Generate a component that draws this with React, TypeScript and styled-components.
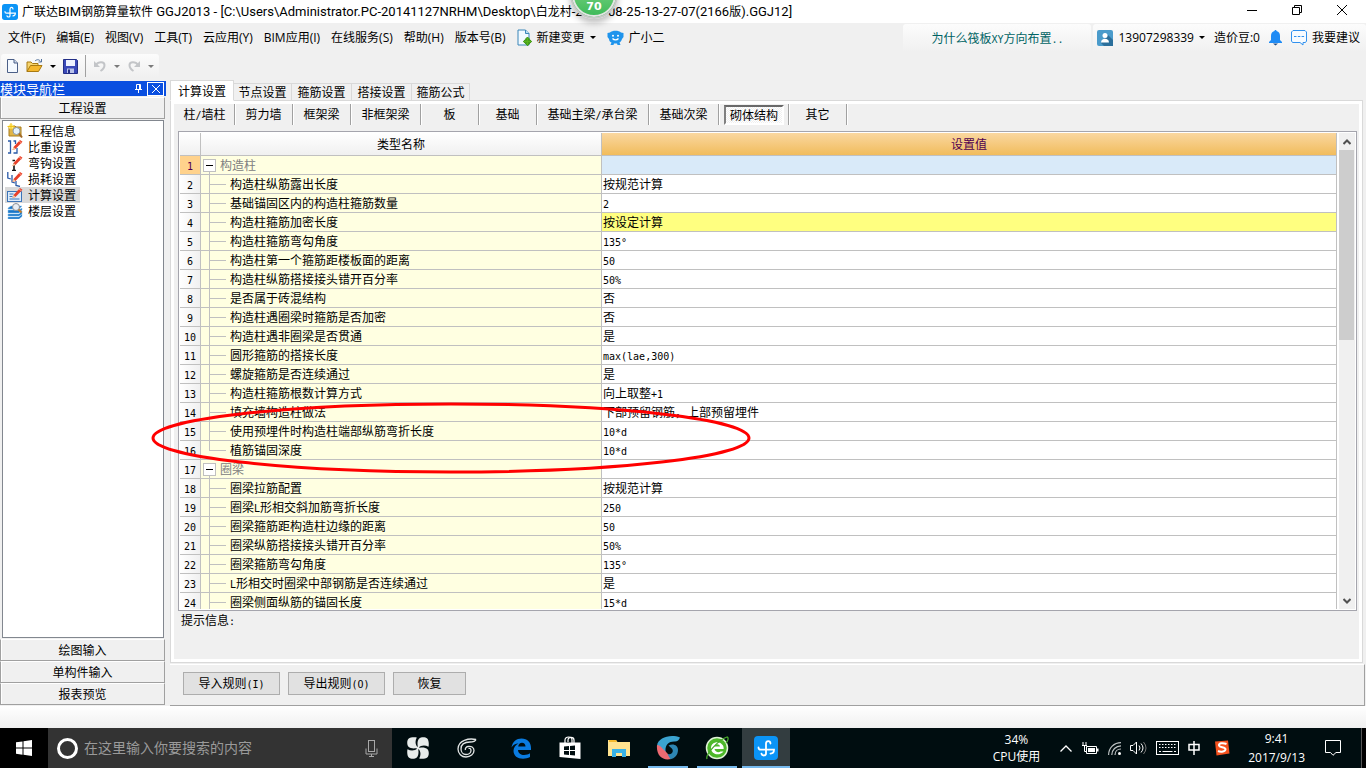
import React from "react";
import styled, { createGlobalStyle, css } from "styled-components";

const song = `"Noto Sans CJK SC", sans-serif`;
const ui = `"Open Sans", "Noto Sans CJK SC", sans-serif`;
const face = "#f0f0f0";
const line = "#c0c0c0";

const GlobalStyle = createGlobalStyle`
  *, *::before, *::after { box-sizing: border-box; }
  html, body { margin: 0; padding: 0; }
  body { background: ${face}; font: 12px/16px ${song}; color: #000; }
  button, input { font: inherit; color: inherit; margin: 0; padding: 0; border: 0; background: none; }
  button { cursor: pointer; white-space: nowrap; }
  svg { display: block; flex: none; }
`;

const Window = styled.div`
  display: flex;
  flex-direction: column;
  height: 100vh;
  min-height: 480px;
  overflow: hidden;
`;

/* ---------- title bar ---------- */
const TitleBar = styled.header`
  position: relative;
  display: flex;
  align-items: center;
  height: 23px;
  flex: none;
  padding: 0 2px;
  background: #fff;
`;
const TitleText = styled.h1`
  flex: 1;
  margin: 0 0 0 4px;
  font: 400 12px/22px ${ui};
  white-space: nowrap;
  overflow: hidden;
`;
const TitleLatin = styled.span`
  font: 13px/1 Roboto, sans-serif;
`;
const CaptionButtons = styled.div`
  display: flex;
  height: 100%;
`;
const CaptionButton = styled.button`
  display: grid;
  place-items: center;
  width: 45px;
  padding-bottom: 3px;
`;
const SpeedBall = styled.div`
  position: absolute;
  z-index: 3;
  left: 570px;
  top: -29px;
  width: 48px;
  height: 48px;
  border-radius: 50%;
  border: 2px solid #c9c9c9;
  background: linear-gradient(#8fdc90, #3cb958);
  box-shadow: inset 0 0 0 2px #e4e4e4, 0 4px 6px rgba(0, 0, 0, 0.25);
  color: #fff;
  font: 700 11px/14px "DejaVu Sans", sans-serif;
  text-align: center;
  padding-top: 27px;
`;

/* ---------- menu bar ---------- */
const MenuBar = styled.nav`
  display: flex;
  align-items: center;
  height: 29px;
  flex: none;
  padding-left: 8px;
  font-family: ${ui};
`;
const MenuGroup = styled.div`
  display: flex;
  align-items: center;
  gap: 11px;
  flex: 1;
`;
const MenuItem = styled.button`
  display: flex;
  align-items: center;
  gap: 5px;
  height: 24px;
`;
const Caret = styled.i<{ $dim?: boolean }>`
  width: 0;
  height: 0;
  border: 3px solid transparent;
  border-bottom: 0;
  border-top-color: ${(p) => (p.$dim ? "#7a7a7a" : "#000")};
`;
const MenuPanel = styled.div<{ $question?: boolean }>`
  display: flex;
  align-items: center;
  height: 28px;
  border-radius: 3px 3px 0 0;
  background: linear-gradient(#fcfcfc, #f0f0f0);
  ${(p) =>
    p.$question
      ? css`width: 188px; justify-content: center; color: #006464; font-family: ${song};`
      : css`gap: 9px; margin-left: 2px; padding: 0 6px 0 4px;`}
`;
const PanelLink = styled.a`
  color: inherit;
  text-decoration: none;
`;

/* ---------- tool bar ---------- */
const ToolBar = styled.div`
  display: flex;
  align-items: center;
  align-self: flex-start;
  height: 24px;
  flex: none;
  margin: 2px 0 2px 1px;
  padding: 0 5px;
  gap: 7px;
  border-radius: 3px;
  background: linear-gradient(#fcfcfc, #f0f0f0);
`;
const ToolButton = styled.button`
  display: flex;
  align-items: center;
  gap: 7px;
  height: 22px;
`;
const ToolDivider = styled.span`
  width: 1px;
  height: 22px;
  background: #a0a0a0;
`;

/* ---------- workspace ---------- */
const Workspace = styled.div`
  display: flex;
  flex: 1;
  min-height: 0;
  padding: 0 1px 0 0;
  gap: 4px;
`;
const SidePanel = styled.aside`
  display: flex;
  flex-direction: column;
  width: 166px;
  flex: none;
  padding: 1px 1px 1px 0;
`;
const SideTitle = styled.div`
  display: flex;
  align-items: center;
  gap: 4px;
  height: 15px;
  flex: none;
  margin-right: -1px;
  padding-right: 2px;
  background: #0a4fe0;
  color: #fff;
  font-size: 13px;
  line-height: 14px;
`;
const SideTitleText = styled.span`
  flex: 1;
`;
const SideTitleButton = styled.button<{ $boxed?: boolean }>`
  display: grid;
  place-items: center;
  width: ${(p) => (p.$boxed ? 17 : 9)}px;
  height: 14px;
  border: ${(p) => (p.$boxed ? "1px solid #fff" : "0")};
`;
const SectionButton = styled.button`
  height: 22px;
  flex: none;
  border: 1px solid #a0a0a0;
  border-top-color: #fff;
  box-shadow: inset 1px 0 #fff;
  line-height: 20px;
`;
const FirstSection = styled(SectionButton)`
  margin-top: 1px;
`;
const SideList = styled.ul`
  flex: 1;
  min-height: 0;
  margin: 1px 1px 1px 2px;
  padding: 2px;
  border: 1px solid #82878f;
  background: #fff;
  list-style: none;
`;
const SideItem = styled.button<{ $on?: boolean }>`
  display: flex;
  align-items: center;
  gap: 5px;
  height: 16px;
  padding: 0 4px 0 2px;
  background: ${(p) => (p.$on ? "#d9d9d9" : "transparent")};
`;

const Main = styled.main`
  display: flex;
  flex-direction: column;
  flex: 1;
  min-width: 0;
`;
const Tabs = styled.div`
  display: flex;
  align-items: flex-end;
  height: 21px;
  flex: none;
  margin-bottom: -1px;
  z-index: 1;
`;
const Tab = styled.button<{ $on?: boolean }>`
  flex: none;
  width: ${(p) => (p.$on ? 64 : 60)}px;
  height: ${(p) => (p.$on ? 21 : 18)}px;
  border: 1px solid #d9d9d9;
  border-left-width: ${(p) => (p.$on ? 1 : 0)}px;
  border-bottom-color: ${(p) => (p.$on ? "#fff" : "#d9d9d9")};
  background: ${(p) => (p.$on ? "#fff" : face)};
  line-height: 16px;
  &:nth-child(2), &:last-child { width: 58px; }
`;
const TabBody = styled.section`
  display: flex;
  flex-direction: column;
  flex: 1;
  min-height: 0;
  margin-right: 2px;
  padding: 0 5px 0 4px;
  border: 1px solid #d9d9d9;
  box-shadow: inset 0 0 0 3px #fff;
`;
const KindBar = styled.div`
  display: flex;
  height: 21px;
  flex: none;
  margin-top: 3px;
`;
const Kind = styled.button<{ $w?: number }>`
  width: ${(p) => p.$w ?? 58}px;
  flex: none;
  padding-bottom: 2px;
  border-right: 1px solid #a0a0a0;
  box-shadow: 1px 0 #fff;
  line-height: 18px;
`;
const KindOn = styled(Kind)`
  display: grid;
  place-items: center;
  padding: 0 4px 0 5px;
`;
const Pressed = styled.span`
  width: 100%;
  height: 20px;
  border: 2px solid #fff;
  border-top-color: #696969;
  border-left-color: #808080;
  background: repeating-conic-gradient(#fff 0 25%, #f0f0f0 0 50%) 0 0 / 2px 2px;
  line-height: 16px;
`;
const GridHolder = styled.div`
  position: relative;
  display: flex;
  flex: 1;
  min-height: 0;
  margin: 6px 0 0 3px;
`;
const GridFrame = styled.div`
  display: flex;
  flex: 1;
  min-width: 0;
  padding: 1px;
  border: 1px solid #a5a5ad;
  background: #fff;
  overflow: hidden;
`;
const Scroller = styled.div`
  flex: 1;
  min-width: 0;
  overflow: hidden;
`;
const Table = styled.table`
  width: 100%;
  table-layout: fixed;
  border-collapse: separate;
  border-spacing: 0;
`;
const Head = styled.th<{ $on?: boolean }>`
  height: 23px;
  padding: 0;
  border-right: 1px solid ${line};
  border-bottom: 1px solid ${line};
  background: ${(p) => (p.$on ? "linear-gradient(#fad7a0, #f1bc5c)" : "linear-gradient(#fff, #f0f0f0)")};
  color: ${(p) => (p.$on ? "#500050" : "#000")};
  font-weight: 400;
  line-height: 22px;
`;
const cell = css`
  height: 19px;
  padding: 0;
  border-right: 1px solid ${line};
  border-bottom: 1px solid ${line};
  font-weight: 400;
  line-height: 18px;
  white-space: nowrap;
  overflow: hidden;
`;
const RowNo = styled.th<{ $on?: boolean }>`
  ${cell}
  background: ${(p) => (p.$on ? "#ffd28c" : "linear-gradient(90deg, #fff, #f0f0f0)")};
  color: ${(p) => (p.$on ? "#500050" : "#000")};
  text-align: center;
`;
const NameCell = styled.td<{ $group?: boolean }>`
  ${cell}
  background: ${(p) =>
    p.$group ? `linear-gradient(${line}, ${line}) 8px 100% / 1px 4px no-repeat #ffffe1` : "#ffffe1"};
  color: ${(p) => (p.$group ? "#808080" : "#000")};
`;
const NameLine = styled.div`
  display: flex;
  align-items: center;
  height: 18px;
`;
const ValueCell = styled.td<{ $tone?: "blue" | "yellow" }>`
  ${cell}
  padding-left: 1px;
  background: ${(p) => (p.$tone === "blue" ? "#d9eaf9" : p.$tone === "yellow" ? "#ffff80" : "#fff")};
`;
const Toggle = styled.button`
  display: grid;
  place-items: center;
  width: 13px;
  height: 13px;
  margin: 0 4px 0 2px;
  border: 1px solid ${line};
  background: #fff;
`;
const Branch = styled.span<{ $last?: boolean }>`
  width: 17px;
  height: 18px;
  margin: 0 4px 0 8px;
  background:
    linear-gradient(${line}, ${line}) 0 0 / 1px ${(p) => (p.$last ? "9px" : "100%")} no-repeat,
    linear-gradient(${line}, ${line}) 0 9px / 17px 1px no-repeat;
`;
const ScrollBar = styled.div`
  display: flex;
  flex-direction: column;
  width: 16px;
  flex: none;
  margin-left: 2px;
  background: ${face};
`;
const ScrollArrow = styled.button`
  display: grid;
  place-items: center;
  height: 17px;
`;
const ScrollTrack = styled.div`
  flex: 1;
  padding-right: 1px;
`;
const ScrollThumb = styled.div`
  height: 43%;
  background: #cdcdcd;
`;
const Callout = styled.svg`
  position: absolute;
  z-index: 2;
  left: -28px;
  top: 269px;
  pointer-events: none;
`;
const Hint = styled.p`
  height: 51px;
  flex: none;
  margin: 0;
  padding: 1px 6px;
`;
const Actions = styled.footer`
  display: flex;
  gap: 8px;
  height: 42px;
  flex: none;
  margin-top: 1px;
  padding: 7px 13px;
  border-top: 1px solid #fff;
  border-right: 1px solid #a0a0a0;
  border-bottom: 1px solid #a0a0a0;
`;
const ActionButton = styled.button<{ $short?: boolean }>`
  width: ${(p) => (p.$short ? 73 : 97)}px;
  height: 23px;
  padding-bottom: 2px;
  border: 1px solid #adadad;
  background: #e1e1e1;
  line-height: 18px;
`;
const StatusStrip = styled.div`
  height: 22px;
  flex: none;
  background: linear-gradient(#fff, #f0f0f0);
`;

/* ---------- task bar ---------- */
const TaskBar = styled.footer`
  display: flex;
  align-items: center;
  height: 40px;
  flex: none;
  background: #000d10;
  color: #fff;
  font-family: ${ui};
`;
const StartButton = styled.button`
  display: grid;
  place-items: center;
  width: 48px;
  height: 40px;
  background: #000;
`;
const Search = styled.label`
  display: flex;
  align-items: center;
  gap: 5px;
  width: 344px;
  height: 40px;
  flex: none;
  padding: 0 14px 0 8px;
  background: #333;
`;
const SearchInput = styled.input`
  flex: 1;
  min-width: 0;
  outline: 0;
  font-size: 14px;
  line-height: 20px;
  &::placeholder { color: #9a9a9a; opacity: 1; }
`;
const Apps = styled.div<{ $wide?: boolean }>`
  display: flex;
  gap: 1px;
  margin-left: ${(p) => (p.$wide ? 6 : 2)}px;
`;
const AppButton = styled.button<{ $state?: "open" | "active" }>`
  display: grid;
  place-items: center;
  width: 48px;
  height: 40px;
  ${(p) =>
    p.$state === "open" &&
    css`background: linear-gradient(#76b9ed, #76b9ed) 50% 100% / 40px 2px no-repeat;`}
  ${(p) =>
    p.$state === "active" &&
    css`background: linear-gradient(#76b9ed, #76b9ed) 0 100% / 100% 2px no-repeat #333d40;`}
`;
const Tray = styled.div`
  display: flex;
  align-items: center;
  margin-left: auto;
  height: 40px;
`;
const Meter = styled.div`
  margin-right: 20px;
  text-align: center;
  line-height: 17px;
`;
const TrayIcons = styled.div`
  display: flex;
  align-items: center;
  gap: 9px;
`;
const InputMethod = styled.button`
  margin-left: 5px;
`;
const Clock = styled.time`
  margin: 0 20px 0 18px;
  text-align: center;
  line-height: 19px;
`;
const ActionCenter = styled.button`
  display: grid;
  place-items: center;
  width: 37px;
  height: 40px;
  padding-right: 20px;
  border-right: 1px solid #555;
`;
const ShowDesktop = styled.span`
  width: 4px;
  height: 40px;
  background: #000;
`;

const Half = styled.span`
  font: 10px/1 "DejaVu Sans Mono", monospace;
`;

/* Half-width runs are set in a six-pixel monospace beside twelve-pixel Han characters. */
function Song({ children }: { children: string }) {
  return (
    <>
      {children.split(/([\x21-\x7e°]+)/).map((part, i) => (i % 2 ? <Half key={i}>{part}</Half> : part))}
    </>
  );
}

/* ---------- icons ---------- */
const AppLogo = ({ size }: { size: number }) => (
  <svg width={size} height={size} viewBox="0 0 24 24">
    <rect width="24" height="24" rx="4" fill="#0b94f6" />
    <path
      d="M16.500 7.500c-.2-3.300-4.500-3.300-4.500.3V17.500c0 2.600-4 2.600-4.500.2M4.500 11.500c0 1.500.8 2.200 2.200 2.200H20c0 2.300-1.300 3.700-3.500 4"
      fill="none" stroke="#fff" strokeWidth="1.800" strokeLinecap="round"
    />
  </svg>
);
const NewDoc = () => (
  <svg width="13" height="16" viewBox="0 0 13 16">
    <path d="M1.500 1.500h6.500l3.500 3.500v9.500h-10z" fill="#f4f9ff" stroke="#4b5f87" />
    <path d="M8 1.500V5h3.500" fill="#cfdcf0" stroke="#4b5f87" />
  </svg>
);
const OpenFolder = () => (
  <svg width="17" height="16" viewBox="0 0 17 16">
    <path d="M1 13.500V4h4l1.500 1.500H12V8" fill="#f7d56f" stroke="#a87a12" />
    <path d="M1 13.500 4.500 7.500H16l-3.500 6z" fill="#f5b82e" stroke="#a87a12" />
    <path d="M9 3c2-2 4.500-1.500 5.500.5M15.500 1v3h-3" fill="none" stroke="#51719c" />
  </svg>
);
const Save = () => (
  <svg width="15" height="15" viewBox="0 0 15 15">
    <path d="M.5.5h13l1 1v13H.5z" fill="#3a49b8" stroke="#232f86" />
    <path d="M3 1h9v6H3z" fill="#eef2ff" />
    <path d="M4 9.500h7V14H4z" fill="#b9c2ea" />
    <path d="M5 10.500h2V14H5z" fill="#232f86" />
  </svg>
);
const Undo = ({ flip }: { flip?: boolean }) => (
  <svg width="14" height="14" viewBox="0 0 14 14">
    <g transform={flip ? "translate(14 0) scale(-1 1)" : undefined}>
      <path d="M3 6c2.500-4 8.500-3.500 8.500 0 0 2.500-1.500 4.500-4 6" fill="none" stroke="#c3c5c8" strokeWidth="2" />
      <path d="M1 2v6h6z" fill="#c3c5c8" />
    </g>
  </svg>
);
const NewChange = () => (
  <svg width="15" height="17" viewBox="0 0 15 17">
    <path d="M1 1h7.500L12 4.500V16H1z" fill="#f1f9ff" stroke="#3a86b8" />
    <path d="M8.500 1v3.500H12" fill="#b8def5" stroke="#3a86b8" />
    <path d="M10.500 8l2 2.200h-1v1.300h1v-1l2.200 2-2.200 2v-1h-1v1h1l-2 2.200-2-2.200h1v-1h-1v1l-2.200-2 2.200-2v1h1v-1.300h-1z" fill="#58b41c" stroke="#3b9410" strokeWidth="1" />
  </svg>
);
const Robot = () => (
  <svg width="17" height="16" viewBox="0 0 17 16">
    <path d="M3 2.500C5 0 12 0 14 2.500l2.500.5v4L15 9c-.5 2-1.500 3-2.500 3.500L13.500 15h-3l-.5-1.500H7L6.500 15h-3l1-2.500C3 12 2.200 11 2 9L.5 7V3z" fill="#1f94ec" />
    <circle cx="6" cy="5.800" r="1" fill="#fff" />
    <circle cx="11" cy="5.800" r="1" fill="#fff" />
    <path d="M5.500 8.500c1.500 1.800 4.500 1.800 6 0" fill="none" stroke="#fff" strokeWidth="1.200" />
  </svg>
);
const User = () => (
  <svg width="16" height="16" viewBox="0 0 16 16">
    <rect width="16" height="16" rx="2" fill="#4a9bcb" />
    <path d="M11 5l5 5v6H7l-3-3z" fill="#2b6f9b" />
    <circle cx="8" cy="5.500" r="2.500" fill="#fff" />
    <path d="M4 12.500c0-5 8-5 8 0z" fill="#fff" />
  </svg>
);
const Bell = () => (
  <svg width="13" height="16" viewBox="0 0 13 16">
    <path d="M6.500 0c.8 0 1 .6 1 1C10 1.500 11 3.500 11 6v4l2 2v1H0v-1l2-2V6c0-2.500 1-4.500 3.500-5 0-.4.200-1 1-1z" fill="#1e8bf5" />
    <path d="M4 13.500h5l-2.500 2z" fill="#1a4b86" />
  </svg>
);
const Bubble = () => (
  <svg width="16" height="16" viewBox="0 0 16 16">
    <path d="M2 .5h12l1.500 1.500v9l-1 1.500H12V15l-3-2.500H1.500l-1-1.500V2z" fill="#f7fbff" stroke="#3191ee" />
    <path d="M3 6.500h2.500M6.800 6.500h2.500M10.600 6.500h2.500" stroke="#3191ee" />
  </svg>
);

const pencil = (
  <>
    <path d="M5.500 11 6.500 8 13 1l2.500 1.800L8.500 10z" fill="#e8402a" />
    <path d="M5.500 11l1-3 2 2z" fill="#f3d3a4" />
    <path d="M12 2l2.500 2" stroke="#ff9c84" />
  </>
);
const SideIcon = ({ kind }: { kind: string }) => (
  <svg width="16" height="16" viewBox="0 0 16 16">
    {kind === "info" && (
      <>
        <path d="M2 3h6l1 1h5v9H2z" fill="#e0b548" stroke="#a97c1c" />
        <circle cx="4" cy="3.500" r="2.500" fill="#ffef7a" />
        <path d="M4 0v7M.5 3.500h7" stroke="#f2c21a" />
        <circle cx="9.500" cy="8" r="3.500" fill="#e4f2fd" stroke="#8a99a8" />
        <path d="M12 10.500l3 4" stroke="#a06a28" strokeWidth="2" />
      </>
    )}
    {kind === "weight" && (
      <>
        <path d="M1 2h2.500v12H1M6.500 2h2v3M6.500 14H10V9" fill="none" stroke="#2a5aa8" strokeWidth="1.300" />
        {pencil}
      </>
    )}
    {kind === "hook" && (
      <>
        <path d="M7 8v7M5 15.500h4M5.500 5.500H8" stroke="#111" strokeWidth="1.600" fill="none" />
        {pencil}
      </>
    )}
    {kind === "loss" && (
      <>
        <path d="M.8 1v6l3 1M5 4v7l3 1M9 10v4.500l4 1" fill="none" stroke="#2a5aa8" strokeWidth="1.300" />
        {pencil}
      </>
    )}
    {kind === "calc" && (
      <>
        <rect x=".5" y="4.500" width="14" height="10" fill="#dcecfb" stroke="#3b74b8" />
        <path d="M2.500 7h4M2.500 9.500h3M2.500 12h10" stroke="#3b74b8" />
        {pencil}
      </>
    )}
    {kind === "floor" && (
      <>
        <path d="M1 5l3-2h11l-3 3H1zM1 7h11l3-2v2l-3 3H1zM1 11h11l3-3v3l-3 2H1zM1 14h11l3-3v2.500L12 16H1z" fill="#1976c8" stroke="#8fc6ee" strokeWidth=".5" />
        <circle cx="9" cy="4" r="3.500" fill="#e8eef4" stroke="#8a8f96" />
        <path d="M11.500 6.500l3 3" stroke="#c07c2c" strokeWidth="2" />
      </>
    )}
  </svg>
);

/* ---------- data ---------- */
const menus = ["文件(F)", "编辑(E)", "视图(V)", "工具(T)", "云应用(Y)", "BIM应用(I)", "在线服务(S)", "帮助(H)", "版本号(B)"];
const sideItems: [string, string][] = [
  ["info", "工程信息"], ["weight", "比重设置"], ["hook", "弯钩设置"],
  ["loss", "损耗设置"], ["calc", "计算设置"], ["floor", "楼层设置"],
];
const tabs = ["计算设置", "节点设置", "箍筋设置", "搭接设置", "箍筋公式"];
const kinds: [string, number][] = [
  ["柱/墙柱", 60], ["剪力墙", 58], ["框架梁", 58], ["非框架梁", 70], ["板", 58],
  ["基础", 58], ["基础主梁/承台梁", 112], ["基础次梁", 70], ["砌体结构", 70], ["其它", 58],
];
type Row = { name: string; value?: string; last?: boolean; tone?: "blue" | "yellow" };
const rows: Row[] = [
  { name: "构造柱", tone: "blue" },
  { name: "构造柱纵筋露出长度", value: "按规范计算" },
  { name: "基础锚固区内的构造柱箍筋数量", value: "2" },
  { name: "构造柱箍筋加密长度", value: "按设定计算", tone: "yellow" },
  { name: "构造柱箍筋弯勾角度", value: "135°" },
  { name: "构造柱第一个箍筋距楼板面的距离", value: "50" },
  { name: "构造柱纵筋搭接接头错开百分率", value: "50%" },
  { name: "是否属于砖混结构", value: "否" },
  { name: "构造柱遇圈梁时箍筋是否加密", value: "否" },
  { name: "构造柱遇非圈梁是否贯通", value: "是" },
  { name: "圆形箍筋的搭接长度", value: "max(lae,300)" },
  { name: "螺旋箍筋是否连续通过", value: "是" },
  { name: "构造柱箍筋根数计算方式", value: "向上取整+1" },
  { name: "填充墙构造柱做法", value: "下部预留钢筋，上部预留埋件" },
  { name: "使用预埋件时构造柱端部纵筋弯折长度", value: "10*d" },
  { name: "植筋锚固深度", value: "10*d", last: true },
  { name: "圈梁" },
  { name: "圈梁拉筋配置", value: "按规范计算" },
  { name: "圈梁L形相交斜加筋弯折长度", value: "250" },
  { name: "圈梁箍筋距构造柱边缘的距离", value: "50" },
  { name: "圈梁纵筋搭接接头错开百分率", value: "50%" },
  { name: "圈梁箍筋弯勾角度", value: "135°" },
  { name: "L形相交时圈梁中部钢筋是否连续通过", value: "是" },
  { name: "圈梁侧面纵筋的锚固长度", value: "15*d" },
];

export default function App() {
  return (
    <Window>
      <GlobalStyle />
      <TitleBar>
        <AppLogo size={16} />
        <TitleText>
          广联达<TitleLatin>BIM</TitleLatin>钢筋算量软件
          <TitleLatin>{" GGJ2013 - [C:\\Users\\Administrator.PC-20141127NRHM\\Desktop\\"}</TitleLatin>
          白龙村<TitleLatin>-2017-08-25-13-27-07(2166</TitleLatin>版<TitleLatin>).GGJ12]</TitleLatin>
        </TitleText>
        <CaptionButtons>
          <CaptionButton aria-label="最小化">
            <svg width="10" height="10"><path d="M0 5.500h10" stroke="#000" /></svg>
          </CaptionButton>
          <CaptionButton aria-label="还原">
            <svg width="10" height="10"><path d="M.5 2.500h7v7h-7zM2.500 2.500v-2h7v7h-2" fill="none" stroke="#000" /></svg>
          </CaptionButton>
          <CaptionButton aria-label="关闭">
            <svg width="10" height="10"><path d="M0 0l10 10M10 0L0 10" stroke="#000" /></svg>
          </CaptionButton>
        </CaptionButtons>
        <SpeedBall>70</SpeedBall>
      </TitleBar>

      <MenuBar>
        <MenuGroup>
          {menus.map((m) => <MenuItem key={m}>{m}</MenuItem>)}
          <MenuItem><NewChange />新建变更<Caret /></MenuItem>
          <MenuItem><Robot />广小二</MenuItem>
        </MenuGroup>
        <MenuPanel $question>
          <PanelLink href="#question"><Song>为什么筏板XY方向布置..</Song></PanelLink>
        </MenuPanel>
        <MenuPanel>
          <MenuItem><User />13907298339<Caret /></MenuItem>
          <span>造价豆:0</span>
          <MenuItem aria-label="通知"><Bell /></MenuItem>
          <MenuItem><Bubble />我要建议</MenuItem>
        </MenuPanel>
      </MenuBar>

      <ToolBar>
        <ToolButton aria-label="新建"><NewDoc /></ToolButton>
        <ToolButton aria-label="打开"><OpenFolder /><Caret /></ToolButton>
        <ToolButton aria-label="保存"><Save /></ToolButton>
        <ToolDivider />
        <ToolButton aria-label="撤销"><Undo /><Caret $dim /></ToolButton>
        <ToolButton aria-label="恢复操作"><Undo flip /><Caret $dim /></ToolButton>
      </ToolBar>

      <Workspace>
        <SidePanel>
          <SideTitle>
            <SideTitleText>模块导航栏</SideTitleText>
            <SideTitleButton aria-label="固定">
              <svg width="7" height="9"><path d="M1.500 5V.5h4V5M4.500 1v4M0 5.500h7M3.500 6v3" fill="none" stroke="#fff" /></svg>
            </SideTitleButton>
            <SideTitleButton $boxed aria-label="关闭面板">
              <svg width="8" height="8"><path d="M0 0l8 8M8 0L0 8" stroke="#fff" /></svg>
            </SideTitleButton>
          </SideTitle>
          <FirstSection>工程设置</FirstSection>
          <SideList>
            {sideItems.map(([kind, label]) => (
              <li key={kind}>
                <SideItem $on={kind === "calc"}><SideIcon kind={kind} />{label}</SideItem>
              </li>
            ))}
          </SideList>
          <SectionButton>绘图输入</SectionButton>
          <SectionButton>单构件输入</SectionButton>
          <SectionButton>报表预览</SectionButton>
        </SidePanel>

        <Main>
          <Tabs role="tablist">
            {tabs.map((t, i) => <Tab key={t} role="tab" aria-selected={i === 0} $on={i === 0}>{t}</Tab>)}
          </Tabs>
          <TabBody>
            <KindBar>
              {kinds.map(([label, w]) =>
                label === "砌体结构"
                  ? <KindOn key={label} $w={w}><Pressed>{label}</Pressed></KindOn>
                  : <Kind key={label} $w={w}><Song>{label}</Song></Kind>
              )}
            </KindBar>
            <GridHolder>
              <GridFrame>
                <Scroller>
                  <Table>
                    <colgroup>
                      <col width="21" />
                      <col width="401" />
                      <col />
                    </colgroup>
                    <thead>
                      <tr>
                        <Head />
                        <Head>类型名称</Head>
                        <Head $on>设置值</Head>
                      </tr>
                    </thead>
                    <tbody>
                      {rows.map((r, i) => {
                        const group = r.value === undefined;
                        return (
                          <tr key={i}>
                            <RowNo scope="row" $on={i === 0}><Half>{i + 1}</Half></RowNo>
                            <NameCell $group={group}>
                              <NameLine>
                                {group ? (
                                  <Toggle aria-label="折叠">
                                    <svg width="7" height="1"><path d="M0 .5h7" stroke="#000" /></svg>
                                  </Toggle>
                                ) : (
                                  <Branch $last={r.last} />
                                )}
                                <span><Song>{r.name}</Song></span>
                              </NameLine>
                            </NameCell>
                            <ValueCell $tone={r.tone}>{r.value && <Song>{r.value}</Song>}</ValueCell>
                          </tr>
                        );
                      })}
                    </tbody>
                  </Table>
                </Scroller>
                <ScrollBar>
                  <ScrollArrow aria-label="向上滚动">
                    <svg width="8" height="6"><path d="M.5 5l3.500-3.500L7.500 5" fill="none" stroke="#505050" strokeWidth="2" /></svg>
                  </ScrollArrow>
                  <ScrollTrack><ScrollThumb /></ScrollTrack>
                  <ScrollArrow aria-label="向下滚动">
                    <svg width="8" height="6"><path d="M.5 1L4 4.500 7.500 1" fill="none" stroke="#505050" strokeWidth="2" /></svg>
                  </ScrollArrow>
                </ScrollBar>
              </GridFrame>
              <Callout width="602" height="76" viewBox="0 0 602 76">
                <ellipse cx="301" cy="38" rx="298" ry="34" fill="none" stroke="#f00" strokeWidth="3" />
              </Callout>
            </GridHolder>
            <Hint><Song>提示信息:</Song></Hint>
          </TabBody>
          <Actions>
            <ActionButton><Song>导入规则(I)</Song></ActionButton>
            <ActionButton><Song>导出规则(O)</Song></ActionButton>
            <ActionButton $short>恢复</ActionButton>
          </Actions>
        </Main>
      </Workspace>
      <StatusStrip />

      <TaskBar>
        <StartButton aria-label="开始">
          <svg width="16" height="16" viewBox="0 0 16 16"><path d="M0 2.300 6.500 1.400v6.100H0zM7.500 1.200 16 0v7.500H7.500zM0 8.500h6.500v6.200L0 13.800zM7.500 8.500H16V16l-8.500-1.200z" fill="#fff" /></svg>
        </StartButton>
        <Search>
          <svg width="23" height="23" viewBox="0 0 23 23"><circle cx="11.500" cy="11.500" r="9" fill="none" stroke="#fff" strokeWidth="3" /></svg>
          <SearchInput type="text" aria-label="搜索" placeholder="在这里输入你要搜索的内容" />
          <svg width="13" height="17" viewBox="0 0 13 17" fill="none" stroke="#a8a8a8"><rect x="3.500" y=".5" width="6" height="11" /><path d="M1 8.500v5.500h11V8.500M6.500 14v2.500M4 16.500h5" /></svg>
        </Search>
        <Apps>
          <AppButton aria-label="浏览器一">
            <svg width="22" height="22" viewBox="0 0 22 22" fill="#e8eceb">
              {[0, 90, 180, 270].map((a) => (
                <path
                  key={a}
                  transform={`rotate(${a} 11 11)`}
                  d="M10.800 10.600C8.500 12 3.500 11.800 1.500 9.800-.2 8-.2 3.500 1.500 1.800 3.200 0 8 0 9.800.5 7.800 4 8.200 8 10.800 10.600z"
                />
              ))}
              <circle cx="11" cy="11" r="1.500" />
            </svg>
          </AppButton>
          <AppButton aria-label="广联达服务">
            <svg width="20" height="20" viewBox="0 0 20 20" fill="none" stroke="#e0e4e4" strokeWidth="1.300">
              <path d="M19 1.500C12 0 1 2 1 11c0 4.500 3.500 8 8 8 4.500 0 8-3 8-6.500S14 8 11 8.500c-2 .3-3 2-2.500 3.500" />
              <path d="M19 1.500c-1 2.500-3 2.500-6 2.500C7.500 4 4 6.500 4 11c0 3 2 5.500 5 5.500s5-2 5-4-1.500-2.500-2.500-2" />
            </svg>
          </AppButton>
        </Apps>
        <Apps $wide>
          <AppButton aria-label="Edge">
            <svg width="21" height="21" viewBox="0 0 21 21"><path d="M.5 9.500C1.500 3.500 5.500.5 10.500.5c6 0 9.500 4 9.500 9.500V12H7c.2 3.500 3 5 6 5 2.500 0 4.500-.7 6-1.700V19c-2 1.200-4.500 1.700-7 1.700-5.500 0-9.500-3-9.500-8C2.500 9.500 4.500 7 7.500 5.500 4.500 5.500 2 7 .5 9.500zM7.200 8.500h7.300C14.500 6 13 4.700 11 4.700s-3.500 1.500-3.800 3.800z" fill="#0a7be0" /></svg>
          </AppButton>
          <AppButton aria-label="应用商店">
            <svg width="22" height="24" viewBox="0 0 22 24"><path d="M.5 6.500l21 0V23L.5 21z" fill="#fff" /><path d="M6 9V4c0-4 7-4 7 0v3M9 6V4c0-3.500 6-3.500 6 0v4" fill="none" stroke="#fff" strokeWidth="1.200" /><path d="M5 10.500l5-.5v4H5zM11 10l5-.5V14h-5zM5 15h5v4l-5-.5zM11 15h5v4.500L11 19z" fill="#000d10" /></svg>
          </AppButton>
          <AppButton aria-label="文件资源管理器">
            <svg width="22" height="19" viewBox="0 0 22 19"><path d="M0 1h8l1.500 2H22v14H0z" fill="#ffe390" /><path d="M1 1h7l1 2H1z" fill="#f5b92d" /><path d="M4 10h14v8h-4v-4H8v4H4z" fill="#38b1e6" /></svg>
          </AppButton>
          <AppButton $state="open" aria-label="广联达">
            <svg width="24" height="24" viewBox="0 0 24 24">
              <path d="M24 1.500C15-2 2 1 1 10l4 6 5 2C8 10 12 5 19 5.500c2.500 0 4-1.500 5-4z" fill="#3ba3d0" />
              <path d="M1 9c3 0 5 3 7 5s5 4 7 9C7 25 0 20 1 9z" fill="#ee6a72" />
              <path d="M12.500 9.500c5-2.500 9.500 0 9.500 4.500 0 5-3.500 8.500-7.500 9.300l-3-5c4.500.2 6-2.300 5-4.800-.7-1.500-2-2-4-4z" fill="#2d86b4" />
            </svg>
          </AppButton>
          <AppButton $state="open" aria-label="360浏览器">
            <svg width="24" height="24" viewBox="0 0 24 24"><circle cx="12" cy="12" r="10.500" fill="#4db82a" stroke="#dff3d6" strokeWidth="1.500" /><path d="M18.500 15.500c-4 5-12.500 3-12.500-3.500s9-8 12-2.500c.5 1 .7 2 .7 3.500H9.500c.5 3 4 4 6 2.500zM9.500 10.500H15c-.5-3-5-3-5.500 0z" fill="#fff" /><path d="M2 23C0 18 15 3 22 1c2 .5 1 4-1 6" fill="none" stroke="#45a82a" strokeWidth="1.300" /></svg>
          </AppButton>
          <AppButton $state="active" aria-label="GGJ2013"><AppLogo size={24} /></AppButton>
        </Apps>
        <Tray>
          <Meter>34%<br />CPU使用</Meter>
          <TrayIcons>
            <svg width="12" height="7"><path d="M.5 6.500L6 1l5.500 5.500" fill="none" stroke="#fff" strokeWidth="1.300" /></svg>
            <svg width="18" height="13" viewBox="0 0 18 13"><path d="M5.500 4.500h10v7h-10z" fill="none" stroke="#fff" /><path d="M7 6h7v4H7zM16 6.500h1.500v3H16z" fill="#fff" /><path d="M2 0v3M5 0v3M1 3.500h5M3.500 4v5.500h2" fill="none" stroke="#fff" /></svg>
            <svg width="13" height="13" viewBox="0 0 13 13" fill="none" stroke="#bfc4c5" strokeWidth="1.200"><path d="M.6 13C.6 6 6 .6 13 .6M3.800 13c0-5 4-9.200 9.200-9.200M7 13c0-3.500 2.500-6 6-6" /><circle cx="11.500" cy="11.500" r="1.500" fill="#fff" stroke="none" /></svg>
            <svg width="17" height="14" viewBox="0 0 17 14" fill="none" stroke="#fff"><path d="M.5 4.500H3L6.500 1v12L3 9.500H.5zM9 4.500q2 2.500 0 5" /><path d="M11 2.500q4 4.500 0 9" /><path d="M13.500 1q5 6 0 12" stroke="#777" /></svg>
            <svg width="23" height="14" viewBox="0 0 23 14" fill="none" stroke="#fff"><rect x=".5" y=".5" width="22" height="13" /><path d="M3 3.500h17M3 6.500h17" strokeDasharray="1.500 1.500" /><path d="M3 10.500h2M6.500 10.500h10M18 10.500h2" /></svg>
            <svg width="12" height="14" viewBox="0 0 12 14" fill="none" stroke="#fff" strokeWidth="1.500"><path d="M1 3.500h10v5.500H1zM6 0v14" /></svg>
            <InputMethod aria-label="输入法">
              <svg width="16" height="16" viewBox="0 0 16 16"><path d="M1 1.500 14 .5l1.500 13-13 2z" fill="#f4511e" /><path d="M12.500 4C9 2.500 4.500 3 5 5.500c.4 2 6.500 1.500 6.500 3.800 0 2.200-4.500 3-7.500 1.700" fill="none" stroke="#fff" strokeWidth="2" /></svg>
            </InputMethod>
          </TrayIcons>
          <Clock>9:41<br />2017/9/13</Clock>
          <ActionCenter aria-label="操作中心">
            <svg width="16" height="16" viewBox="0 0 16 16"><path d="M.5.5h15v12H11L8 15.300 5.500 12.500h-5z" fill="none" stroke="#fff" /></svg>
          </ActionCenter>
          <ShowDesktop />
        </Tray>
      </TaskBar>
    </Window>
  );
}
